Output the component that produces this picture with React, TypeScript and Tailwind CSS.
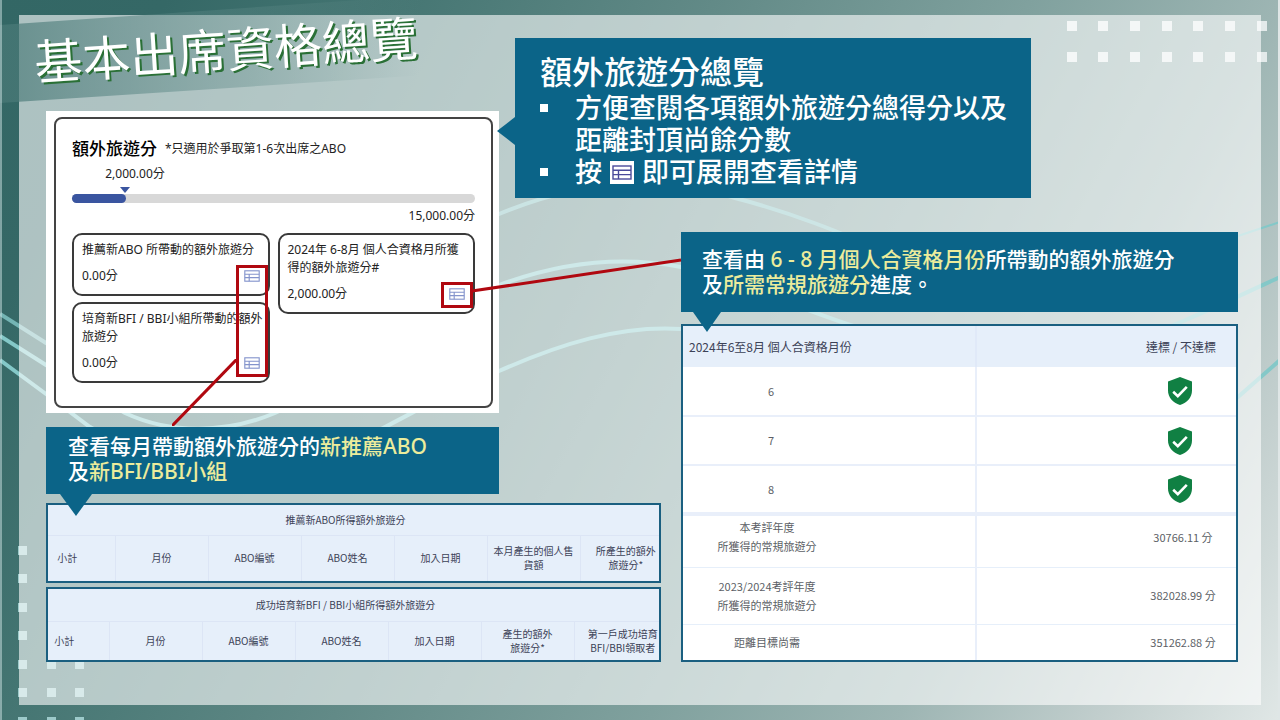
import type { ReactNode } from "react";
import clsx from "clsx";

const tableHeads = {
  referral: ["小計", "月份", "ABO編號", "ABO姓名", "加入日期", "本月產生的個人售\n貨額", "所產生的額外\n旅遊分*"],
  group: ["小計", "月份", "ABO編號", "ABO姓名", "加入日期", "產生的額外\n旅遊分*", "第一戶成功培育\nBFI/BBI領取者"],
};

const months = ["6", "7", "8"];

const totals = [
  { label: "本考評年度\n所獲得的常規旅遊分", value: "30766.11 分", height: "h-[53px]", pad: "pb-2" },
  { label: "2023/2024考評年度\n所獲得的常規旅遊分", value: "382028.99 分", height: "h-[57px]", pad: "pb-0" },
  { label: "距離目標尚需", value: "351262.88 分", height: "h-[36px]", pad: "pb-0" },
];

const TableIcon = ({ className }: { className?: string }) => (
  <svg viewBox="0 0 20 15" className={className} fill="none" stroke="currentColor" strokeWidth="1.4" aria-hidden="true">
    <rect x="1" y="1" width="18" height="13" />
    <path d="M1 5.3H19M1 9.6H19M6.5 5.3V14" />
  </svg>
);

const ShieldCheck = () => (
  <svg viewBox="0 0 24 28" className="mx-auto h-7 w-6" role="img" aria-label="達標">
    <path d="M12 0L24 4.4V13.4C24 20.2 19.2 25.6 12 28C4.8 25.6 0 20.2 0 13.4V4.4Z" fill="#108043" />
    <path d="M5.2 14.8L9.8 19.2L18.8 9.8" fill="none" stroke="#fff" strokeWidth="2.6" />
  </svg>
);

const Backdrop = () => (
  <div className="absolute inset-0 bg-[linear-gradient(118deg,#336765_0%,#356866_10%,#447572_23%,#628a87_43%,#80a19e_62%,#9db5b3_77%,#c4d0cf_90%,#e0e7e6_100%)]">
    <svg viewBox="0 0 1280 720" preserveAspectRatio="none" className="absolute h-full w-full" aria-hidden="true">
      <g fill="none" stroke="#84c8c8" strokeWidth="4">
        <path d="M0 314L46 343C210 440 340 280 499 214C600 172 680 180 735 198C790 212 840 232 900 258" opacity="0.8" />
        <path d="M0 336L46 365L125 413C170 434 225 434 275 413C350 380 420 315 499 285C580 255 640 259 681 267C740 280 800 310 860 328" />
        <path d="M0 360L46 394L90 427C190 490 290 480 385 427C430 404 460 385 499 371C560 344 620 325 681 329" />
        <path d="M1100 352C1170 330 1230 300 1280 277" />
        <path d="M1200 432L1238 397L1280 360" />
        <path d="M1220 242L1280 222" strokeWidth="2" />
      </g>
      <g fill="#9dcaca">
        {[18, 47, 75].map((x) =>
          [546, 574, 603, 631, 660, 688, 717].map((y) => <rect key={`${x}-${y}`} x={x} y={y} width="9" height="9" />)
        )}
      </g>
      <g fill="#e3eaea">
        {[1067, 1098, 1130, 1162, 1193, 1225, 1257].map((x) =>
          [21, 52].map((y) => <rect key={`${x}-${y}`} x={x} y={y} width="10" height="10" />)
        )}
      </g>
    </svg>
    <div className="absolute inset-x-[19px] inset-y-[15px] bg-white/60" />
    <svg viewBox="0 0 1280 720" preserveAspectRatio="none" className="absolute h-full w-full" aria-hidden="true">
      <defs>
        <linearGradient id="ribbon" gradientUnits="userSpaceOnUse" x1="0" x2="420" y1="0" y2="0">
          <stop offset="0" stopColor="#4a7a78" stopOpacity="0.7" />
          <stop offset="0.6" stopColor="#5d8987" stopOpacity="0.35" />
          <stop offset="1" stopColor="#6b9391" stopOpacity="0" />
        </linearGradient>
      </defs>
      <path d="M0 25L360 0H640V61L0 103Z" fill="url(#ribbon)" />
      <path d="M1 0V720" stroke="#cfe3e4" strokeWidth="1" />
      <path d="M1279 0V720" stroke="#dfe6e6" strokeWidth="2" />
    </svg>
  </div>
);

type CalloutProps = {
  className?: string;
  arrow: string;
  children: ReactNode;
};

const Callout = ({ className, arrow, children }: CalloutProps) => (
  <div className={clsx("relative bg-[#0b6488] font-medium text-white", className)}>
    {children}
    <span className={clsx("absolute z-10 bg-[#0b6488]", arrow)} />
  </div>
);

type ScoreCardProps = {
  title: ReactNode;
  score: string;
};

const ScoreCard = ({ title, score }: ScoreCardProps) => (
  <div className="rounded-[10px] border-2 border-[#3a3a3a] px-2 pt-[6px] pb-[9px]">
    <p className="whitespace-nowrap">{title}</p>
    <div className="mt-2 flex items-center justify-between">
      <span>{score}</span>
      <button type="button" aria-label="展開查看詳情" className="text-[#8494cc]">
        <TableIcon className="h-3 w-4" />
      </button>
    </div>
  </div>
);

const OverviewCard = () => (
  <section className="bg-white pt-[6px] pr-[6px] pb-[5px] pl-2 text-[12px] leading-[18px] text-[#222]">
    <div className="rounded-lg border-2 border-[#444] px-4 pt-[18px] pb-[23px]">
      <h2 className="flex items-center gap-2 leading-6">
        <span className="text-[17px] font-medium text-black">額外旅遊分</span>
        <span>*只適用於爭取第1-6次出席之ABO</span>
      </h2>
      <div className="mt-1 flex w-[126px] justify-center">2,000.00分</div>
      <div className="mt-1 ml-12 h-[6px] w-[10px] bg-[#3a55a0] [clip-path:polygon(0_0,100%_0,50%_100%)]" />
      <div className="mt-px h-[9px] rounded-full bg-[#d8d8d8]">
        <div className="h-full rounded-full bg-[#3a55a0]" style={{ width: `${(2000 / 15000) * 100}%` }} />
      </div>
      <div className="mt-1 text-right">15,000.00分</div>
      <div className="mt-2 grid grid-cols-2 items-start gap-2">
        <div className="relative flex flex-col gap-[6px]">
          <ScoreCard title="推薦新ABO 所帶動的額外旅遊分" score="0.00分" />
          <ScoreCard title={<>培育新BFI / BBI小組所帶動的額外<br />旅遊分</>} score="0.00分" />
          <span className="absolute top-8 right-[2px] bottom-[6px] w-8 border-3 border-[#b00810]" />
          <svg viewBox="0 0 65 67" className="absolute top-[126px] right-[33px] z-10 h-[67px] w-[65px]" aria-hidden="true">
            <path d="M65 0L0 67" stroke="#b00810" strokeWidth="3" />
          </svg>
        </div>
        <div className="relative">
          <ScoreCard title={<>2024年 6-8月 個人合資格月所獲<br />得的額外旅遊分#</>} score="2,000.00分" />
          <span className="absolute right-[2px] bottom-[6px] h-[26px] w-8 border-3 border-[#b00810]" />
          <svg viewBox="0 0 208 32" className="absolute top-[26px] left-[194px] z-10 h-8 w-[208px] overflow-visible" aria-hidden="true">
            <path d="M0 32L209 1" stroke="#b00810" strokeWidth="3" />
          </svg>
        </div>
      </div>
    </div>
  </section>
);

type HeadTableProps = {
  title: string;
  heads: string[];
  titleHeight: string;
  rowHeight: string;
  firstCol: string;
};

const HeadTable = ({ title, heads, titleHeight, rowHeight, firstCol }: HeadTableProps) => (
  <div className="border-2 border-[#1a5f80] bg-[#e6effa] text-[10px] leading-[14px] text-[#3c4257]">
    <table className="w-full table-fixed">
      <colgroup>
        <col className={firstCol} />
        {heads.slice(2).map((head) => <col key={head} className="w-[93px]" />)}
        <col />
      </colgroup>
      <thead>
        <tr className={titleHeight}>
          <th colSpan={heads.length} className="border-b border-[#dce5f5] pr-4 font-normal">{title}</th>
        </tr>
        <tr className={rowHeight}>
          {heads.map((head) => (
            <th key={head} className="border-r border-[#dce5f5] font-normal whitespace-pre first:pr-7 last:border-r-0 last:pl-3">
              {head}
            </th>
          ))}
        </tr>
      </thead>
    </table>
  </div>
);

const ProgressTable = () => (
  <div className="border-2 border-[#1a5f80] bg-white text-[11px] leading-[19px] text-[#5c5f66]">
    <table className="w-full table-fixed">
      <colgroup>
        <col className="w-[53%]" />
        <col />
      </colgroup>
      <thead className="bg-[#e6effa] text-[12px] text-[#3c4257]">
        <tr className="h-[41px]">
          <th className="border-r-2 border-[#e0e9f8] pl-[6px] text-left font-normal">2024年6至8月 個人合資格月份</th>
          <th className="pr-5 text-right font-normal">達標 / 不達標</th>
        </tr>
      </thead>
      <tbody>
        {months.map((month) => (
          <tr key={month} className="h-[49px] border-b-2 border-[#e9effa] last:border-b-4">
            <th className="border-r-2 border-[#e9effa] font-normal">
              <div className="w-[176px]">{month}</div>
            </th>
            <td>
              <div className="ml-auto w-28"><ShieldCheck /></div>
            </td>
          </tr>
        ))}
      </tbody>
      <tbody>
        {totals.map((row) => (
          <tr key={row.label} className={clsx("border-b border-[#e6effa] last:border-b-0", row.height)}>
            <th className={clsx("border-r-2 border-[#e9effa] font-normal", row.pad)}>
              <div className="w-[168px] whitespace-pre">{row.label}</div>
            </th>
            <td className={row.pad}>
              <div className="ml-auto w-[106px] text-center">{row.value}</div>
            </td>
          </tr>
        ))}
      </tbody>
    </table>
  </div>
);

export default function App() {
  return (
    <main className="relative min-h-screen overflow-hidden font-['Noto_Sans','Noto_Sans_CJK_TC',sans-serif]">
      <Backdrop />
      <div className="relative grid grid-cols-[453fr_16fr_146fr_20fr_350fr_207fr] pr-[42px] pl-[46px]">
        {/* left side: title, score card, monthly tables */}
        <div className="col-span-3 col-start-1 row-start-1 grid grid-cols-subgrid content-start">
          <h1 className="col-span-3 -ml-3 h-[111px] pt-[26px] text-[48px] leading-[48px] text-white">
            <span className="inline-block rotate-[-3.7deg] whitespace-nowrap [text-shadow:2px_2px_0_#2a7036]">基本出席資格總覽</span>
          </h1>
          <div className="relative z-10">
            <OverviewCard />
          </div>
          <Callout
            className="col-start-1 mt-[14px] pt-[7px] pb-[10px] pl-[22px] text-[21px] leading-[25px]"
            arrow="top-full left-[14px] h-[22px] w-8 [clip-path:polygon(0_0,100%_0,50%_100%)]"
          >
            <p>查看每月帶動額外旅遊分的<span className="text-[#ecec9c]">新推薦ABO</span></p>
            <p>及<span className="text-[#ecec9c]">新BFI/BBI小組</span></p>
          </Callout>
          <div className="col-span-3 mt-[9px] flex flex-col gap-1 font-['Noto_Sans_CJK_TC',sans-serif]">
            <HeadTable title="推薦新ABO所得額外旅遊分" heads={tableHeads.referral} titleHeight="h-[30px]" rowHeight="h-[46px]" firstCol="w-[67px]" />
            <HeadTable title="成功培育新BFI / BBI小組所得額外旅遊分" heads={tableHeads.group} titleHeight="h-8" rowHeight="h-[39px]" firstCol="w-[61px]" />
          </div>
        </div>

        {/* right side: explanations and qualification progress */}
        <div className="col-span-4 col-start-3 row-start-1 grid grid-cols-subgrid content-start pt-[38px]">
          <Callout
            className="col-span-3 pt-[14px] pb-[10px] pl-[25px] text-[27px] leading-8"
            arrow="top-[79px] right-full h-7 w-[18px] [clip-path:polygon(100%_0,100%_100%,0_50%)]"
          >
            <h2 className="text-[32px] leading-10">額外旅遊分總覽</h2>
            <ul>
              <li className="flex gap-[27px]">
                <span className="mt-3 h-2 w-2 shrink-0 bg-white" />
                <span className="whitespace-nowrap">方便查閱各項額外旅遊分總得分以及<br />距離封頂尚餘分數</span>
              </li>
              <li className="flex gap-[27px]">
                <span className="mt-3 h-2 w-2 shrink-0 bg-white" />
                <span className="flex items-center gap-2">
                  按
                  <span className="bg-white px-[2px] py-1 text-[#4a4a9a]">
                    <TableIcon className="h-[15px] w-5" />
                  </span>
                  即可展開查看詳情
                </span>
              </li>
            </ul>
          </Callout>
          <Callout
            className="col-span-2 col-start-3 mt-[34px] py-[15px] pl-[21px] text-[21px] leading-[25px]"
            arrow="top-full left-[12px] h-5 w-7 [clip-path:polygon(0_0,100%_0,50%_100%)]"
          >
            <p>查看由<span className="text-[#ecec9c]"> 6 - 8 月個人合資格月份</span>所帶動的額外旅遊分</p>
            <p>及<span className="text-[#ecec9c]">所需常規旅遊分</span>進度。</p>
          </Callout>
          <div className="col-span-2 col-start-3 mt-3 font-['Noto_Sans_CJK_TC',sans-serif]">
            <ProgressTable />
          </div>
        </div>
      </div>
    </main>
  );
}
